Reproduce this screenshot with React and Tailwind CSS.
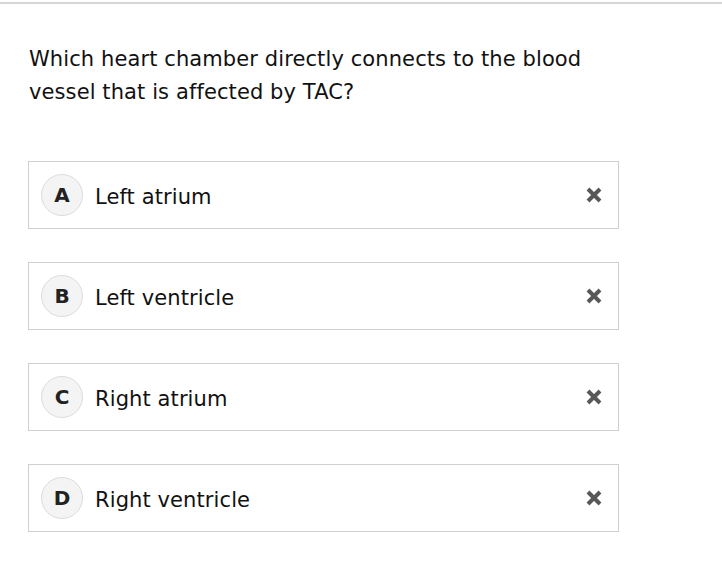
import React from 'react';

const OPTIONS = [
  { letter: 'A', text: 'Left atrium' },
  { letter: 'B', text: 'Left ventricle' },
  { letter: 'C', text: 'Right atrium' },
  { letter: 'D', text: 'Right ventricle' },
];

function CrossIcon() {
  return (
    <svg width="18" height="18" viewBox="0 0 18 18" className="text-[#585858]">
      <path d="M3 3L15 15M15 3L3 15" stroke="currentColor" strokeWidth="4" strokeLinecap="butt" />
    </svg>
  );
}

export default function App() {
  return (
    <div className="min-h-screen bg-white text-black font-['DejaVu_Sans',Verdana,sans-serif]">
      <div className="pt-[2px]">
        <div className="h-[2px] bg-[#d6d6d6]" />
      </div>

      {/* Question */}
      <p className="ml-[29px] mt-[39px] w-[600px] text-[21px] tracking-[0.1px] leading-[33px] text-[#111]">
        Which heart chamber directly connects to the blood<br />
        vessel that is affected by TAC?
      </p>

      {/* Options */}
      <div className="ml-[28px] mt-[52px] w-[591px] flex flex-col gap-[33px]">
        {OPTIONS.map((o) => (
          <div
            key={o.letter}
            className="h-[68px] border border-[#cfcfcf] flex items-center pl-[12px] pr-[14px]"
          >
            <div className="w-[42px] h-[42px] shrink-0 rounded-full border border-[#dcdcdc] bg-[#f4f4f4] flex items-center justify-center">
              <span className="text-[20px] leading-none font-bold text-[#222]">{o.letter}</span>
            </div>
            <span className="ml-[12px] pt-[3px] text-[21px] leading-[28px] tracking-[0.1px] text-[#111]">{o.text}</span>
            <div className="ml-auto mr-[1px] flex items-center">
              <CrossIcon />
            </div>
          </div>
        ))}
      </div>
    </div>
  );
}
